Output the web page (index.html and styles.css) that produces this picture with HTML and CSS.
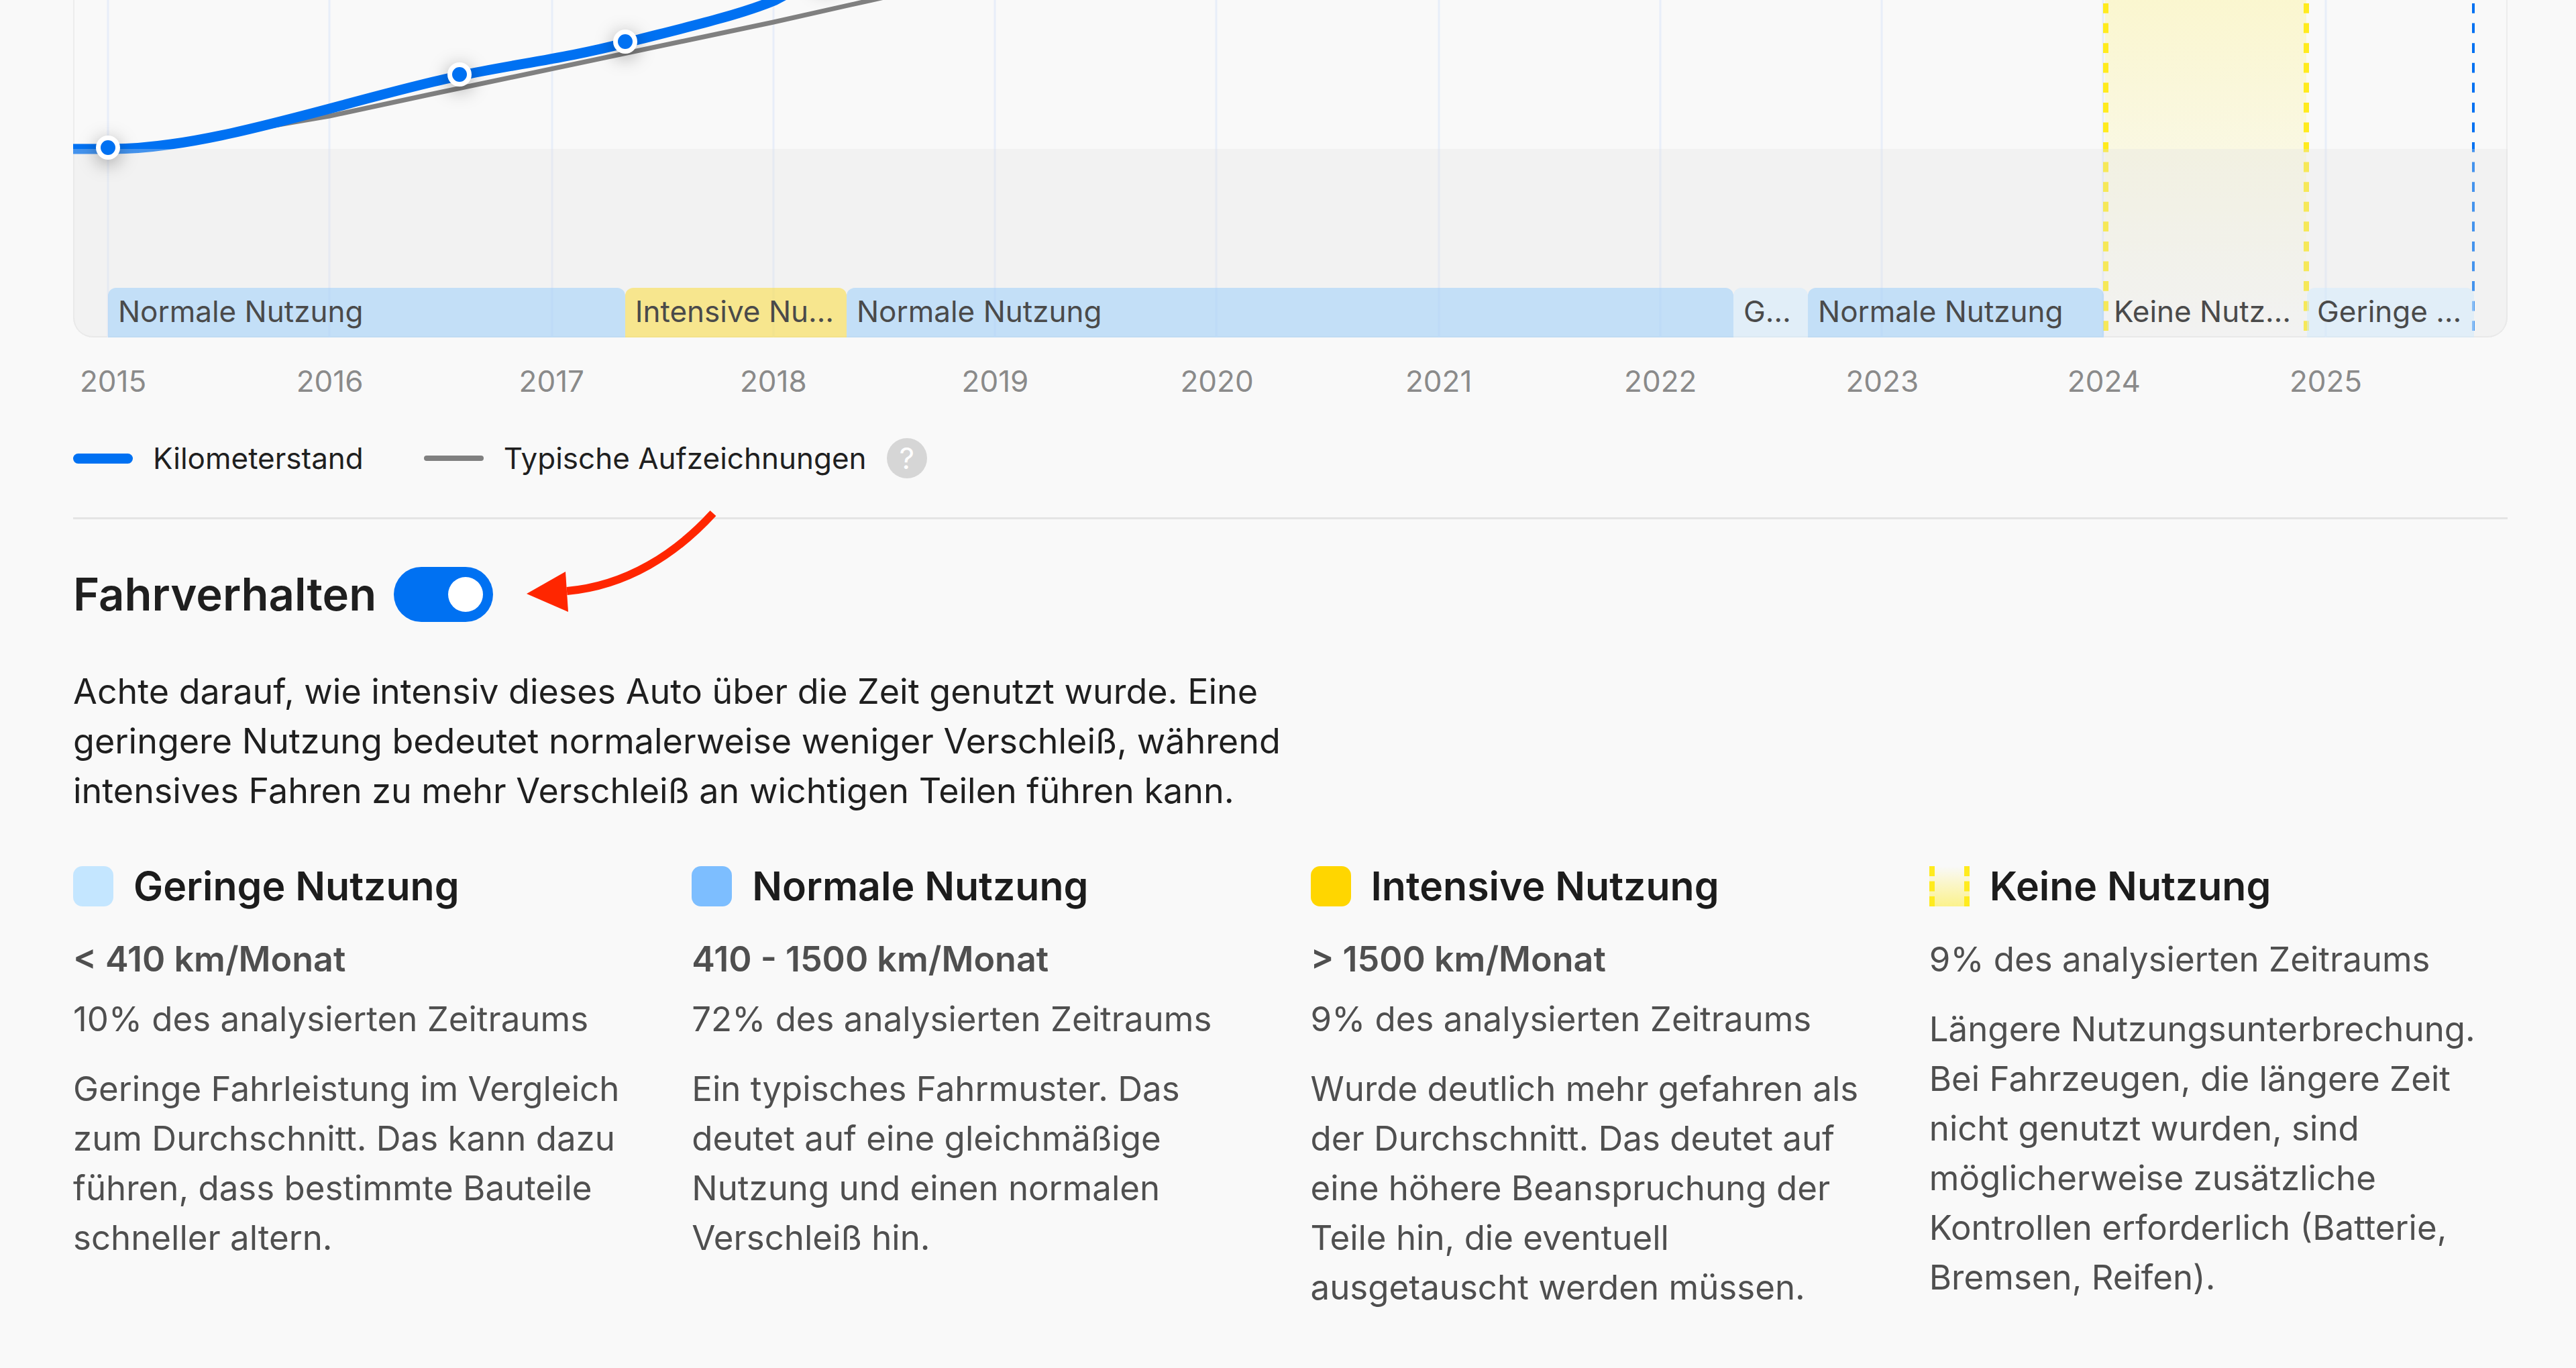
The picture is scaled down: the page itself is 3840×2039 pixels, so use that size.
FILE: index.html
```html
<!DOCTYPE html>
<html lang="de">
  <head>
    <meta charset="UTF-8" />
    <meta name="viewport" content="width=device-width, initial-scale=1.0" />
    <title>Fahrverhalten</title>

    <link rel="stylesheet" href="styles.css">
  </head>
  <body>
    <main class="report">
      <section class="chart">
        <div class="plot">
          <svg class="plot-lines" viewBox="0 0 3629 503" preserveAspectRatio="none" aria-hidden="true">
            <defs>
              <linearGradient id="unused" x1="0" y1="0" x2="0" y2="1">
                <stop offset="0" stop-color="#ffeb1e" stop-opacity="0.19" />
                <stop offset="1" stop-color="#ffeb1e" stop-opacity="0" />
              </linearGradient>
            </defs>

            <!-- Years -->
            <path class="grid-line" d="M52 0V503M382 0V503M714 0V503M1044 0V503M1374 0V503M1704 0V503M2036 0V503M2366 0V503M2696 0V503M3026 0V503M3358 0V503" />

            <!-- Period without usage -->
            <rect x="3029" y="0" width="300" height="503" fill="url(#unused)" />
            <path class="unused-line" pathLength="33" d="M3030 5V493" />
            <path class="unused-line" pathLength="33" d="M3329 5V493" />

            <!-- Today -->
            <path class="today-line" pathLength="33" d="M3578 5V493" />

            <path class="typical-line" d="M0 222H52C120 222 180 207 382 173L531 141L1044 33L1191 0L1250 -13" />
            <path class="mileage-line" d="M0 222H52C202 224 410 148 576 113C650 97 740 86 823 64C900 44 990 24 1047 0L1122 -40" />

            <rect class="below-zero" x="0" y="222" width="3629" height="281" />
          </svg>

          <span class="marker" style="left: 1.42%; top: 220px"></span>
          <span class="marker" style="left: 15.87%; top: 111px"></span>
          <span class="marker" style="left: 22.67%; top: 62px"></span>
          <span class="marker" style="left: 30.92%; top: -36px"></span>

          <div class="periods">
            <span class="before" style="width: 1.43%"></span>
            <span class="period normal" style="width: 21.24%">Normale Nutzung</span>
            <span class="period intensive" style="width: 9.1%">Intensive Nutzung</span>
            <span class="period normal" style="width: 36.43%">Normale Nutzung</span>
            <span class="period low" style="width: 3.06%">Geringe Nutzung</span>
            <span class="period normal" style="width: 12.15%">Normale Nutzung</span>
            <span class="period" style="width: 8.35%">Keine Nutzung</span>
            <span class="period low" style="width: 6.86%">Geringe Nutzung</span>
          </div>
        </div>

        <div class="years">
          <span class="first">2015</span>
          <span>2016</span>
          <span>2017</span>
          <span>2018</span>
          <span>2019</span>
          <span>2020</span>
          <span>2021</span>
          <span>2022</span>
          <span>2023</span>
          <span>2024</span>
          <span>2025</span>
        </div>

        <div class="legend">
          <div class="legend-item">
            <i class="line line-mileage"></i>
            Kilometerstand
          </div>
          <div class="legend-item">
            <i class="line line-typical"></i>
            Typische Aufzeichnungen
            <button class="help" type="button">?</button>
          </div>
        </div>
      </section>

      <section class="driving">
        <div class="driving-title">
          <h2><label for="driving-toggle">Fahrverhalten</label></h2>
          <input id="driving-toggle" class="toggle" type="checkbox" role="switch" checked />
          <svg class="arrow" viewBox="0 0 290 160" aria-hidden="true">
            <path d="M283 10C228 70 155 118 65 126" fill="none" stroke="#ff2600" stroke-width="12" />
            <path d="M5 130L63 97L67 157Z" fill="#ff2600" />
          </svg>
        </div>

        <p class="intro">
          Achte darauf, wie intensiv dieses Auto über die Zeit genutzt wurde. Eine
          geringere Nutzung bedeutet normalerweise weniger Verschleiß, während
          intensives Fahren zu mehr Verschleiß an wichtigen Teilen führen kann.
        </p>

        <div class="usages">
          <article class="usage">
            <h3><i class="swatch swatch-low"></i>Geringe Nutzung</h3>
            <p class="rate">&lt; 410 km/Monat</p>
            <p class="share">10% des analysierten Zeitraums</p>
            <p>
              Geringe Fahrleistung im Vergleich zum Durchschnitt. Das kann dazu
              führen, dass bestimmte Bauteile schneller altern.
            </p>
          </article>

          <article class="usage">
            <h3><i class="swatch swatch-normal"></i>Normale Nutzung</h3>
            <p class="rate">410 - 1500 km/Monat</p>
            <p class="share">72% des analysierten Zeitraums</p>
            <p>
              Ein typisches Fahrmuster. Das deutet auf eine gleichmäßige
              Nutzung und einen normalen Verschleiß hin.
            </p>
          </article>

          <article class="usage">
            <h3><i class="swatch swatch-intensive"></i>Intensive Nutzung</h3>
            <p class="rate">&gt; 1500 km/Monat</p>
            <p class="share">9% des analysierten Zeitraums</p>
            <p>
              Wurde deutlich mehr gefahren als der Durchschnitt. Das deutet auf
              eine höhere Beanspruchung der Teile hin, die eventuell
              ausgetauscht werden müssen.
            </p>
          </article>

          <article class="usage">
            <h3>
              <svg class="swatch" viewBox="0 0 60 60" aria-hidden="true">
                <defs>
                  <linearGradient id="unused-swatch" x1="0" y1="0" x2="0" y2="1">
                    <stop offset="0" stop-color="#ffeb1e" stop-opacity="0" />
                    <stop offset="1" stop-color="#ffeb1e" stop-opacity="0.5" />
                  </linearGradient>
                </defs>
                <rect width="60" height="60" fill="url(#unused-swatch)" />
                <path d="M4 0V60M56 0V60" fill="none" stroke="#ffeb1e" stroke-width="8" stroke-dasharray="15 7.5" />
              </svg>
              Keine Nutzung
            </h3>
            <p class="share">9% des analysierten Zeitraums</p>
            <p>
              Längere Nutzungsunterbrechung. Bei Fahrzeugen, die längere Zeit
              nicht genutzt wurden, sind möglicherweise zusätzliche Kontrollen
              erforderlich (Batterie, Bremsen, Reifen).
            </p>
          </article>
        </div>
      </section>
    </main>
  </body>
</html>
```

FILE: styles.css
```css
* {
  box-sizing: border-box;
}

body {
  background-color: #f9f9f9;
  color: #1f1f1f;
  font-family: Inter, sans-serif;
  font-size: 52px;
  line-height: 74px;
  margin: 0;
  overflow-x: hidden;
}

h2,
h3,
p {
  margin: 0;
}

.report {
  padding: 0 102px 40px 109px;
}

.chart {
  border-bottom: 3px solid #e5e5e5;
  font-size: 44px;
  line-height: 60px;
  padding-bottom: 58px;
}

.plot {
  border-radius: 0 0 30px 30px;
  box-shadow: inset 2px 0 #ededed, inset -2px 0 #ededed, inset 0 -2px #ededed;
  display: flex;
  flex-direction: column;
  height: 503px;
  justify-content: flex-end;
  position: relative;
}

.plot-lines {
  border-radius: 0 0 30px 30px;
  height: 100%;
  left: 0;
  position: absolute;
  top: 0;
  width: 100%;
}

.plot-lines path {
  fill: none;
}

.grid-line {
  stroke: #e8eef9;
  stroke-width: 3px;
}

.unused-line,
.today-line {
  stroke: #ffeb1e;
  stroke-dasharray: 1 1;
  stroke-width: 8px;
}

.today-line {
  stroke: #0071f2;
  stroke-width: 4px;
}

.typical-line {
  stroke: #808080;
  stroke-width: 7px;
}

.mileage-line {
  stroke: #0071f2;
  stroke-width: 15px;
}

.below-zero {
  fill: rgba(226, 226, 226, 0.3);
}

.marker {
  background-color: #0071f2;
  border: 7px solid #fff;
  border-radius: 50%;
  box-shadow: 0 6px 28px rgba(0, 0, 0, 0.35);
  height: 36px;
  position: absolute;
  transform: translate(-50%, -50%);
  width: 36px;
}

.periods {
  display: flex;
  position: relative;
}

.before {
  flex: none;
}

.period {
  border-radius: 12px 12px 0 0;
  color: #4a4a4a;
  flex: none;
  line-height: 70px;
  overflow: hidden;
  padding: 0 15px 4px;
  text-overflow: ellipsis;
  white-space: nowrap;
}

.normal {
  background-color: rgba(160, 208, 250, 0.58);
}

.intensive {
  background-color: rgba(252, 220, 60, 0.55);
}

.low {
  background-color: rgba(208, 234, 254, 0.5);
}

.years {
  color: #8a8a8a;
  display: flex;
  margin: 35px 0 55px;
}

.years span {
  flex: none;
  text-align: center;
  width: 9.11%;
}

.years .first {
  padding-left: 10px;
  text-align: left;
  width: 5.99%;
}

.legend {
  display: flex;
  gap: 90px;
}

.legend-item {
  align-items: center;
  display: flex;
  gap: 30px;
}

.line {
  border-radius: 8px;
  width: 89px;
}

.line-mileage {
  background-color: #0071f2;
  height: 15px;
}

.line-typical {
  background-color: #808080;
  height: 8px;
}

.help {
  background-color: #d6d6d6;
  border: 0;
  border-radius: 50%;
  color: #fff;
  cursor: pointer;
  font-family: inherit;
  font-size: 44px;
  height: 60px;
  line-height: 60px;
  padding: 0;
  width: 60px;
}

.driving-title {
  align-items: center;
  display: flex;
  gap: 26px;
  padding: 71px 0 67px;
  position: relative;
}

.driving-title h2 {
  font-size: 67px;
  font-weight: 600;
  line-height: 80px;
}

.toggle {
  appearance: none;
  background-color: #0071f2;
  border-radius: 41px;
  cursor: pointer;
  display: flex;
  height: 82px;
  justify-content: flex-end;
  margin: 0;
  padding: 15px;
  width: 148px;
}

.toggle::before {
  background-color: #fff;
  border-radius: 50%;
  content: '';
  height: 52px;
  width: 52px;
}

.toggle:not(:checked) {
  background-color: #b5b5b5;
  justify-content: flex-start;
}

/* Points at the toggle, starts above the divider */
.arrow {
  height: 160px;
  left: 671px;
  position: absolute;
  top: -19px;
  width: 290px;
}

.intro {
  max-width: 1860px;
}

.usages {
  display: grid;
  gap: 60px;
  grid-template-columns: repeat(4, 1fr);
  margin-top: 68px;
}

.usage {
  color: #4f4f4f;
  font-size: 51px;
}

.usage h3 {
  align-items: center;
  color: #1c1c1c;
  display: flex;
  font-size: 59px;
  font-weight: 600;
  gap: 30px;
  margin-bottom: 35px;
}

.swatch {
  border-radius: 14px;
  flex: none;
  height: 60px;
  width: 60px;
}

.swatch-low {
  background-color: #c4e6ff;
}

.swatch-normal {
  background-color: #7dbeff;
}

.swatch-intensive {
  background-color: #ffd600;
}

svg.swatch {
  border-radius: 0;
}

.usage .rate {
  font-size: 52px;
  font-weight: 600;
  margin-bottom: 15px;
}

.share {
  margin-bottom: 30px;
}
```
